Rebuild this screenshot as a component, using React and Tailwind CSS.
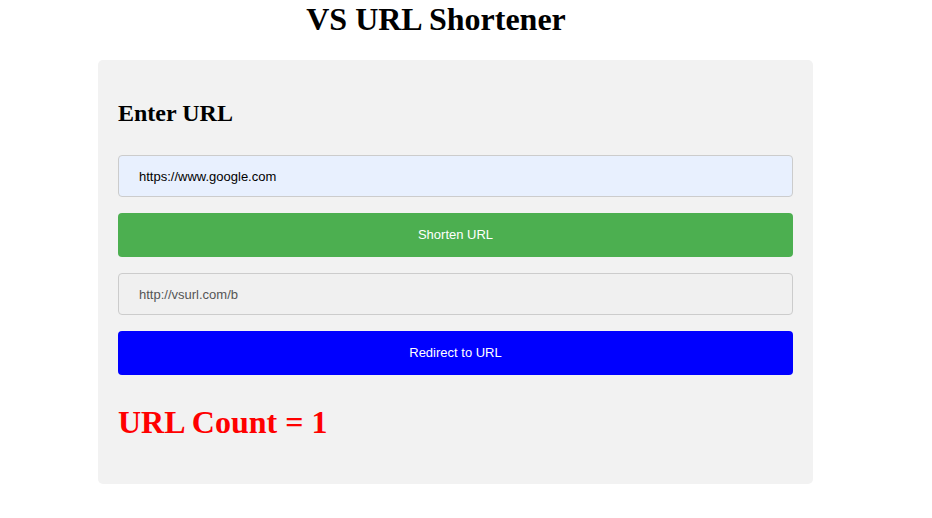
import { useState } from 'react';

const App = () => {
    const [url, setUrl] = useState('https://www.google.com');
    const [shortUrl] = useState('http://vsurl.com/b');
    const [count] = useState(1);

    return (
        <div className="min-h-[518px] w-[932px] bg-white font-['Liberation_Serif',serif]">
            <h1 className="m-0 w-[872px] pt-px text-center text-[32px] font-bold leading-[37px] text-black">
                VS URL Shortener
            </h1>

            <div className="ml-[98px] mt-[22px] flex w-[715px] flex-col rounded-[5px] bg-[#f2f2f2] p-5">
                <h2 className="my-5 text-[24px] font-bold leading-[27px] text-black">Enter URL</h2>

                <input
                    type="text"
                    value={url}
                    onChange={(e) => setUrl(e.target.value)}
                    className="my-2 h-[42px] w-full rounded-[4px] border border-[#cccccc] bg-[#e8f0fe] px-5 font-['Liberation_Sans',Arial,sans-serif] text-[13px] text-black outline-none"
                />

                <button
                    type="button"
                    className="my-2 h-[44px] w-full rounded-[4px] bg-[#4caf50] font-['Liberation_Sans',Arial,sans-serif] text-[13px] text-white"
                >
                    Shorten URL
                </button>

                <input
                    type="text"
                    value={shortUrl}
                    readOnly
                    className="my-2 h-[42px] w-full rounded-[4px] border border-[#cccccc] bg-[#f0f0f0] px-5 font-['Liberation_Sans',Arial,sans-serif] text-[13px] text-[#555555] outline-none"
                />

                <button
                    type="button"
                    className="my-2 h-[44px] w-full rounded-[4px] bg-[#0000ff] font-['Liberation_Sans',Arial,sans-serif] text-[13px] text-white"
                >
                    Redirect to URL
                </button>

                <h1 className="mt-[21px] mb-[23px] text-[32px] font-bold leading-[37px] text-[#ff0000]">
                    URL Count = {count}
                </h1>
            </div>
        </div>
    );
};

export default App;
